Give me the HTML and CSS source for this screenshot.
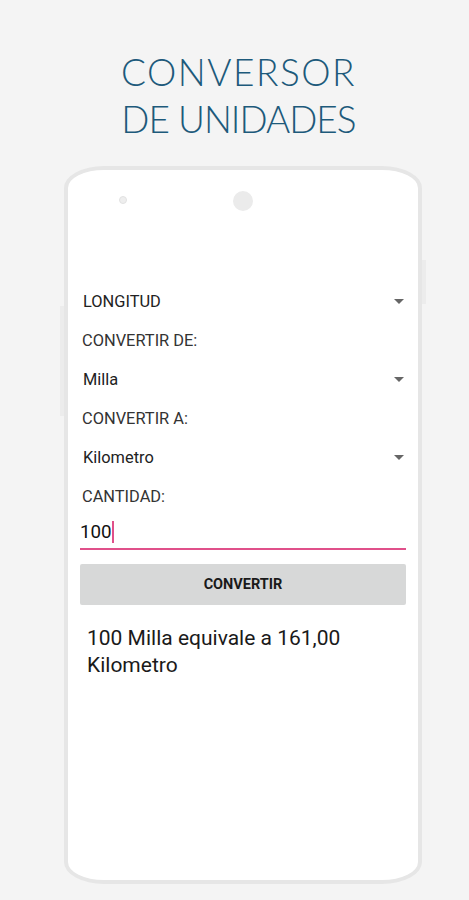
FILE: index.html
```html
<!doctype html>
<html>
<head>
<meta charset="utf-8">
<title>Conversor de unidades</title>
<link rel="stylesheet" href="styles.css">
</head>
<body>
	<h1 class="title"><span class="line1">CONVERSOR</span><span class="line2">DE UNIDADES</span></h1>
	<div class="phone">
		<div class="phone-top">
			<span class="sensor"></span>
			<span class="camera"></span>
		</div>
		<div class="screen">
			<div class="spinner">LONGITUD<span class="arrow"></span></div>
			<div class="label">CONVERTIR DE:</div>
			<div class="spinner">Milla<span class="arrow"></span></div>
			<div class="label">CONVERTIR A:</div>
			<div class="spinner">Kilometro<span class="arrow"></span></div>
			<div class="label">CANTIDAD:</div>
			<div class="field">100<span class="caret"></span></div>
			<div class="btn">CONVERTIR</div>
			<p class="result">100 Milla equivale a 161,00 Kilometro</p>
		</div>
	</div>
</body>
</html>
```

FILE: styles.css
```css
body{
	margin: 0;
	background-color: #f4f4f4;
	font-family: Roboto, "Liberation Sans", sans-serif;
	color: #222;
}
.title{
	margin: 0;
	padding-top: 48px;
	padding-left: 8px;
	text-align: center;
	font-family: Lato, "DejaVu Sans", sans-serif;
	font-weight: 300;
	font-size: 37px;
	line-height: 47px;
	color: #1d5a7b;
}
.title span{
	display: block;
}
.line1{
	letter-spacing: 1.5px;
}
.line2{
	letter-spacing: -1px;
}
.phone{
	position: relative;
	box-sizing: border-box;
	width: 358px;
	height: 718px;
	margin: 24px 0 0 64px;
	background: #fff;
	border: 4px solid #e6e6e6;
	border-radius: 40px 40px 40px 40px / 22px 22px 22px 22px;
}
.phone:before{
	content: "";
	position: absolute;
	left: -8px;
	top: 136px;
	width: 4px;
	height: 110px;
	background: #ececec;
}
.phone:after{
	content: "";
	position: absolute;
	right: -8px;
	top: 90px;
	width: 4px;
	height: 44px;
	background: #ececec;
}
.phone-top{
	position: relative;
	height: 112px;
}
.sensor{
	position: absolute;
	left: 51px;
	top: 26px;
	width: 6px;
	height: 6px;
	border-radius: 50%;
	background: #eeeeee;
	border: 1px solid #e2e2e2;
}
.camera{
	position: absolute;
	left: 165px;
	top: 21px;
	width: 20px;
	height: 20px;
	border-radius: 50%;
	background: #ebebeb;
}
.screen{
	padding: 0 12px;
}
.spinner, .label{
	display: flex;
	align-items: center;
	height: 39px;
	padding-left: 3px;
	font-size: 16.4px;
	color: #222;
}
.label{
	color: #333;
	padding-left: 2px;
}
.spinner{
	justify-content: space-between;
}
.arrow{
	width: 0;
	height: 0;
	margin-right: 2px;
	border-left: 5px solid transparent;
	border-right: 5px solid transparent;
	border-top: 5px solid #666;
}
.field{
	display: flex;
	align-items: center;
	height: 32px;
	font-size: 18.8px;
	color: #111;
	border-bottom: 2px solid #e0508a;
	margin-bottom: 14px;
}
.caret{
	width: 2px;
	height: 22px;
	background: #e0508a;
}
.btn{
	height: 41px;
	line-height: 41px;
	text-align: center;
	background: #d7d8d8;
	border-radius: 2px;
	font-size: 14.5px;
	font-weight: 700;
	color: #1a1a1a;
}
.result{
	margin: 20px 0 0;
	padding: 0 6px 0 7px;
	font-size: 21px;
	line-height: 27px;
	color: #1a1a1a;
	width: 280px;
}
```
